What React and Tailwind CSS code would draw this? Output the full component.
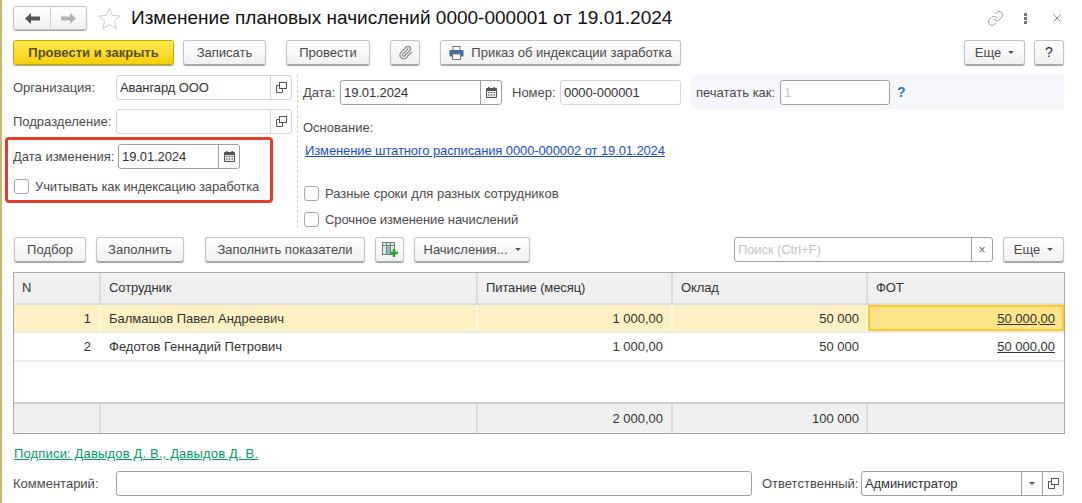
import { Link, Paperclip } from "lucide-react";

function Btn({ children, className = "" }) {
  return (
    <button className={`h-[25px] shrink-0 flex items-center justify-center rounded-[3px] border border-[#c4c4c4] border-b-[#a8a8a8] bg-gradient-to-b from-white to-[#f0f0f0] shadow-[0_1px_1px_#a0a0a0] text-[13px] text-[#4b4b4b] ${className}`}>
      {children}
    </button>
  );
}

function Caret() {
  return <span className="ml-[7px] w-0 h-0 border-x-[3px] border-x-transparent border-t-[3px] border-t-[#555]" />;
}

function CopyIcon() {
  return (
    <svg width="11" height="11" viewBox="0 0 11 11" fill="none" stroke="#555">
      <rect x="3.5" y="0.5" width="7" height="6" fill="white" />
      <path d="M3.5 3.5h-3v7h6v-4" />
    </svg>
  );
}

function CalendarIcon() {
  return (
    <svg width="11" height="11" viewBox="0 0 11 11">
      <rect x="0" y="1" width="11" height="10" rx="1" fill="#555" />
      <rect x="2" y="0" width="1.5" height="2" fill="#555" />
      <rect x="7.5" y="0" width="1.5" height="2" fill="#555" />
      <rect x="1" y="4" width="9" height="6" fill="#e8e8e8" />
      <path d="M2 5h1.5v1H2zM4.750 5h1.500v1h-1.500zM7.500 5H9v1H7.500zM2 7.500h1.500v1H2zM4.750 7.500h1.500v1h-1.500zM7.500 7.500H9v1H7.500z" fill="#555" />
    </svg>
  );
}

function PrinterIcon() {
  return (
    <svg width="15" height="14" viewBox="0 0 15 14">
      <rect x="4" y="0.500" width="7" height="4" fill="white" stroke="#777" />
      <rect x="0.500" y="4" width="14" height="6.500" rx="1" fill="#3f6f9f" />
      <rect x="3.500" y="8" width="8" height="5.500" fill="white" stroke="#777" />
    </svg>
  );
}

function TableAddIcon() {
  return (
    <svg width="16" height="16" viewBox="0 0 16 16">
      <rect x="0.500" y="0.500" width="12" height="12" fill="#dfe8d8" stroke="#6b8a7a" />
      <path d="M0.500 3.500h12M4.500 0.500v12M8.500 0.500v12" stroke="#6b8a7a" />
      <rect x="5" y="4" width="3" height="8" fill="#8fb8c8" />
      <path d="M8 11h8M12 7v8" stroke="#2ea52e" strokeWidth="2.500" />
    </svg>
  );
}

function Input({ value, placeholder, className = "", children, active }) {
  return (
    <div className={`h-[25px] shrink-0 flex items-stretch rounded-[3px] border bg-white ${active ? "border-[#a0a0a0]" : "border-[#d6d6d6]"} ${className}`}>
      <span className={`flex-1 min-w-0 pl-[3px] leading-[24px] tracking-[-0.1px] text-[13px] ${placeholder ? "text-[#c4c4c4]" : "text-[#333]"}`}>
        {value || placeholder}
      </span>
      {children}
    </div>
  );
}

function Addon({ children, active }) {
  return (
    <span className={`w-[21px] flex items-center justify-center border-l ${active ? "border-[#a0a0a0]" : "border-[#d6d6d6]"}`}>
      {children}
    </span>
  );
}

function Checkbox({ label, className = "" }) {
  return (
    <label className={`flex items-center gap-[6px] text-[13px] text-[#4b4b4b] ${className}`}>
      <span className="w-[15px] h-[15px] rounded-[3px] border border-[#a8a8a8] bg-white" />
      {label}
    </label>
  );
}

const gridCols = "grid grid-cols-[87px_377px_195px_195px_196px]";

function Row({ cells, className = "", height }) {
  return (
    <div className={`${gridCols} ${height} ${className}`}>
      {cells}
    </div>
  );
}

function Cell({ children, className = "" }) {
  return (
    <div className={`flex items-center pl-2 pr-2 pt-[1px] text-[13px] text-[#333] ${className}`}>
      {children}
    </div>
  );
}

export default function App() {
  return (
    <div className="w-[1082px] h-[503px] overflow-hidden bg-white border-l-2 border-[#c9b96a] pl-[11px] pr-[18px] flex flex-col font-['Liberation_Sans',Arial,sans-serif]">
      {/* header */}
      <div className="h-[24px] mt-[6px] flex items-center">
        <div className="w-[74px] h-[24px] flex rounded-[3px] border border-[#c4c4c4] bg-gradient-to-b from-white to-[#f0f0f0] shadow-[0_1px_1px_#a0a0a0]">
          <span className="w-[37px] flex items-center justify-center border-r border-[#d0d0d0]">
            <svg width="15" height="11" viewBox="0 0 15 11"><path d="M0 5.500L6 0v3.500h9v4H6V11z" fill="#555" /></svg>
          </span>
          <span className="flex-1 flex items-center justify-center">
            <svg width="15" height="11" viewBox="0 0 15 11"><path d="M15 5.500L9 0v3.500H0v4h9V11z" fill="#b4b4b4" /></svg>
          </span>
        </div>
        <svg className="ml-[11px]" width="23" height="23" viewBox="0 0 24 24" fill="none" stroke="#c8c8c8">
          <path d="M12 1.500l3.200 7.300 7.900.7-6 5.200 1.800 7.800-6.900-4.100-6.900 4.100 1.800-7.800-6-5.200 7.900-.7z" />
        </svg>
        <h1 className="ml-[10px] text-[19px] leading-[24px] text-[#111] whitespace-nowrap">
          Изменение плановых начислений 0000-000001 от 19.01.2024
        </h1>
        <div className="ml-auto flex items-center">
          <Link size={17} strokeWidth={1} color="#777" />
          <span className="ml-[20px] flex flex-col gap-[1px]">
            <span className="w-[3px] h-[3px] bg-[#777]" />
            <span className="w-[3px] h-[3px] bg-[#777]" />
            <span className="w-[3px] h-[3px] bg-[#777]" />
          </span>
          <svg className="ml-[25px] mr-[2px]" width="10" height="10" viewBox="0 0 10 10" stroke="#888" fill="none">
            <path d="M1.500 1.500l7 7M8.500 1.500l-7 7" />
          </svg>
        </div>
      </div>

      {/* command bar */}
      <div className="mt-[10px] flex items-center">
        <button className="h-[25px] w-[161px] rounded-[3px] border border-[#c8a800] bg-gradient-to-b from-[#ffe94a] to-[#f5cf00] shadow-[0_1px_1px_#a0a0a0] text-[13px] font-bold text-[#5a5020]">
          Провести и закрыть
        </button>
        <Btn className="ml-[9px] w-[83px]">Записать</Btn>
        <Btn className="ml-[20px] w-[84px]">Провести</Btn>
        <Btn className="ml-[20px] w-[30px]"><Paperclip size={15} color="#888" /></Btn>
        <Btn className="ml-[20px] w-[241px] gap-[7px]"><PrinterIcon />Приказ об индексации заработка</Btn>
        <Btn className="ml-auto w-[61px]">Еще<Caret /></Btn>
        <Btn className="ml-[9px] w-[30px] text-[#333] text-[14px]">?</Btn>
      </div>

      {/* form */}
      <div className="mt-[10px] h-[153px] flex">
        <div className="w-[279px] shrink-0">
          <div className="flex items-center">
            <span className="w-[103px] pt-[1px] text-[13px] text-[#4b4b4b]">Организация:</span>
            <Input value="Авангард ООО" className="w-[176px]"><Addon><CopyIcon /></Addon></Input>
          </div>
          <div className="mt-[9px] flex items-center">
            <span className="w-[103px] pt-[1px] text-[13px] text-[#4b4b4b]">Подразделение:</span>
            <Input className="w-[176px]"><Addon><CopyIcon /></Addon></Input>
          </div>
          <div className="mt-[3px] -ml-[8px] w-[268px] h-[66px] rounded-[4px] border-[3px] border-[#e53c2e] pl-[5px] pt-[4px]">
            <div className="flex items-center">
              <span className="w-[105px] text-[13px] text-[#4b4b4b]">Дата изменения:</span>
              <Input value="19.01.2024" active className="w-[122px]"><Addon active><CalendarIcon /></Addon></Input>
            </div>
            <Checkbox label="Учитывать как индексацию заработка" className="mt-[8px] ml-[1px] tracking-[-0.12px]" />
          </div>
        </div>

        <div className="ml-[5px] mr-[5px] border-l border-dashed border-[#d0d0d0]" />

        <div className="flex-1 min-w-0">
          <div className="flex items-start">
            <div className="pt-[5px] flex items-center">
              <span className="w-[37px] pt-[1px] text-[13px] text-[#4b4b4b]">Дата:</span>
              <Input value="19.01.2024" active className="w-[162px]"><Addon active><CalendarIcon /></Addon></Input>
              <span className="ml-[10px] w-[48px] pt-[1px] text-[13px] text-[#4b4b4b]">Номер:</span>
              <Input value="0000-000001" className="w-[121px]" />
            </div>
            <div className="ml-[10px] flex-1 h-[34px] bg-[#f5f7fc] pl-[5px] pt-[1px] flex items-center">
              <span className="w-[84px] pt-[1px] text-[13px] text-[#4b4b4b]">печатать как:</span>
              <Input placeholder="1" active className="w-[110px]" />
              <span className="ml-[7px] text-[14px] font-bold text-[#1e7fc8]">?</span>
            </div>
          </div>
          <div className="mt-[11px] text-[13px] leading-[15px] text-[#4b4b4b]">Основание:</div>
          <a className="block mt-[8px] ml-[2px] text-[13px] leading-[15px] tracking-[-0.11px] text-[#1a50c8] underline">
            Изменение штатного расписания 0000-000002 от 19.01.2024
          </a>
          <Checkbox label="Разные сроки для разных сотрудников" className="mt-[26px] ml-[1px]" />
          <Checkbox label="Срочное изменение начислений" className="mt-[6px] ml-[1px] tracking-[-0.1px]" />
        </div>
      </div>

      {/* table commands */}
      <div className="mt-[9px] ml-[1px] flex items-center">
        <Btn className="w-[72px]">Подбор</Btn>
        <Btn className="ml-[10px] w-[88px]">Заполнить</Btn>
        <Btn className="ml-[21px] w-[160px]">Заполнить показатели</Btn>
        <Btn className="ml-[10px] w-[29px]"><TableAddIcon /></Btn>
        <Btn className="ml-[10px] w-[116px]">Начисления...<Caret /></Btn>
        <Input placeholder="Поиск (Ctrl+F)" active className="ml-auto w-[259px]">
          <Addon active><span className="text-[#666] text-[12px] leading-none">×</span></Addon>
        </Input>
        <Btn className="ml-[10px] w-[61px]">Еще<Caret /></Btn>
      </div>

      {/* table */}
      <div className="mt-[10px] w-[1052px] h-[162px] border border-[#a8a8a8] flex flex-col">
        <Row
          height="h-[32px]"
          className="bg-[#f0f0f0] border-b-2 border-[#dcdcdc]"
          cells={["N", "Сотрудник", "Питание (месяц)", "Оклад", "ФОТ"].map((t, i) => (
            <Cell key={t} className={`!pt-0 text-[#4b4b4b] tracking-[-0.1px] ${i < 4 ? "border-r-2 border-[#dcdcdc]" : ""}`}>{t}</Cell>
          ))}
        />
        <Row
          height="h-[28px]"
          className="bg-[#fdf1c3] border-b-2 border-[#ececec]"
          cells={
            <>
              <Cell className="justify-end border-r-2 border-[#fff8e0]">1</Cell>
              <Cell className="border-r-2 border-[#fff8e0]">Балмашов Павел Андреевич</Cell>
              <Cell className="justify-end border-r-2 border-[#fff8e0]">1 000,00</Cell>
              <Cell className="justify-end !pr-[7px] border-r-2 border-[#fff8e0]">50 000</Cell>
              <Cell className="justify-end !pr-[7px] bg-[#fde38a] border-2 border-[#fcc825]"><span className="underline">50 000,00</span></Cell>
            </>
          }
        />
        <Row
          height="h-[29px]"
          className="border-b-2 border-[#ececec]"
          cells={
            <>
              <Cell className="justify-end border-r-2 border-transparent">2</Cell>
              <Cell className="border-r-2 border-transparent">Федотов Геннадий Петрович</Cell>
              <Cell className="justify-end border-r-2 border-transparent">1 000,00</Cell>
              <Cell className="justify-end !pr-[7px] border-r-2 border-transparent">50 000</Cell>
              <Cell className="justify-end !pr-[9px]"><span className="underline">50 000,00</span></Cell>
            </>
          }
        />
        <div className="flex-1" />
        <Row
          height="h-[31px]"
          className="bg-[#f0f0f0] border-t-2 border-[#cfcfcf]"
          cells={
            <>
              <Cell className="!pt-0 border-r-2 border-[#dcdcdc]" />
              <Cell className="!pt-0 border-r-2 border-[#dcdcdc]" />
              <Cell className="!pt-0 justify-end border-r-2 border-[#dcdcdc] text-[#4b4b4b]">2 000,00</Cell>
              <Cell className="!pt-0 justify-end !pr-[7px] border-r-2 border-[#dcdcdc] text-[#4b4b4b]">100 000</Cell>
              <Cell className="!pt-0" />
            </>
          }
        />
      </div>

      {/* footer */}
      <a className="block mt-[12px] ml-[1px] text-[13px] leading-[15px] tracking-[0.16px] text-[#00a060] underline">
        Подписи: Давыдов Д. В., Давыдов Д. В.
      </a>
      <div className="mt-[10px] flex items-center">
        <span className="w-[103px] text-[13px] text-[#4b4b4b]">Комментарий:</span>
        <Input active className="w-[636px]" />
        <span className="ml-[10px] w-[99px] text-[13px] text-[#4b4b4b]">Ответственный:</span>
        <Input value="Администратор" active className="w-[203px]">
          <Addon active><span className="w-0 h-0 border-x-[3px] border-x-transparent border-t-[3px] border-t-[#555]" /></Addon>
          <Addon active><CopyIcon /></Addon>
        </Input>
      </div>
    </div>
  );
}
